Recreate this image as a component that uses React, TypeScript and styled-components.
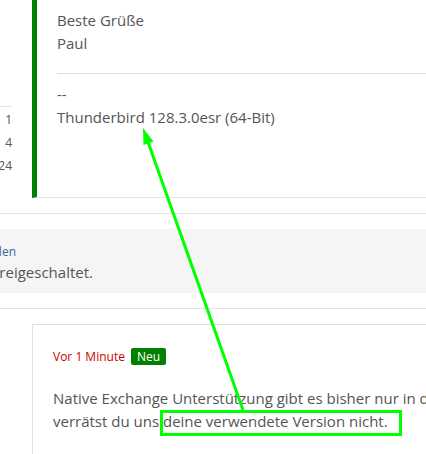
import React from "react";
import styled, { createGlobalStyle } from "styled-components";

const GlobalStyle = createGlobalStyle`
  html, body {
    margin: 0;
    padding: 0;
    background: #fff;
  }
  body {
    font-family: "Open Sans", "Liberation Sans", sans-serif;
    color: #555;
    overflow: hidden;
  }
`;

const Page = styled.div`
  position: relative;
  width: 426px;
  height: 454px;
  overflow: hidden;
`;

const Post = styled.article`
  display: grid;
  grid-template-columns: 12px 1fr;
  column-gap: 20px;
  padding-bottom: 15px;
  border-bottom: 1px solid #e3e3e3;
`;

const Sidebar = styled.aside`
  padding-top: 106px;
`;

const StatList = styled.dl`
  margin: 0;
  padding-top: 1px;
  border-top: 1px solid #e3e3e3;
`;

const StatValue = styled.dd`
  display: flex;
  justify-content: flex-end;
  margin: 0;
  white-space: nowrap;
  font-size: 12px;
  line-height: 23px;
`;

const Content = styled.div`
  padding: 9px 0 69px 20px;
  border-left: 5px solid #008000;
  border-bottom: 1px solid #e3e3e3;
  font-size: 15px;
  line-height: 22.5px;

  p {
    margin: 0;
  }
`;

const Rule = styled.hr`
  height: 0;
  margin: 19px 0 9px;
  border: 0;
  border-top: 1px solid #e0e0e0;
`;

const Notice = styled.section`
  margin: 15px 0;
  padding: 14px 0 9px;
  background: #f5f5f5;
`;

const NoticeLine = styled.div<{ $end: number; $small?: boolean }>`
  display: flex;
  justify-content: flex-end;
  width: ${props => props.$end}px;
  white-space: nowrap;
  font-size: ${props => (props.$small ? "12px" : "15px")};
  line-height: ${props => (props.$small ? "18px" : "23px")};
  color: ${props => (props.$small ? "#3d6a8e" : "#555")};
`;

const Replies = styled.section`
  padding-top: 15px;
  border-top: 1px solid #e3e3e3;
`;

const ReplyBox = styled.div`
  margin: 0 -30px 0 32px;
  padding: 23px 20px 30px;
  border: 1px solid #e0e0e0;
`;

const Meta = styled.div`
  display: flex;
  align-items: center;
  gap: 6px;
  height: 17px;
`;

const Time = styled.span`
  font-size: 12px;
  line-height: 18px;
  color: #cc0000;
`;

const Badge = styled.span`
  padding: 0 6px;
  border-radius: 2px;
  background: #008000;
  color: #fff;
  font-size: 12px;
  line-height: 17px;
`;

const Message = styled.p`
  margin: 22px 0 0;
  font-size: 15px;
  line-height: 22.5px;
  white-space: nowrap;
`;

const Annotation = styled.svg`
  position: absolute;
  top: 0;
  left: 0;
  pointer-events: none;
`;

const stats = ["1", "4", "24"];

const App = () => {
  return (
    <Page>
      <GlobalStyle />
      <Post>
        <Sidebar>
          <StatList>
            {stats.map((value, idx) => (
              <StatValue key={idx}>{value}</StatValue>
            ))}
          </StatList>
        </Sidebar>
        <Content>
          <p>
            Beste Grüße
            <br />
            Paul
          </p>
          <Rule />
          <p>
            --
            <br />
            Thunderbird 128.3.0esr (64-Bit)
          </p>
        </Content>
      </Post>

      <Notice>
        <NoticeLine $end={16} $small>
          Inhalte teilen
        </NoticeLine>
        <NoticeLine $end={93}>Dieser Beitrag wurde noch nicht freigeschaltet.</NoticeLine>
      </Notice>

      <Replies>
        <ReplyBox>
          <Meta>
            <Time>Vor 1 Minute</Time>
            <Badge>Neu</Badge>
          </Meta>
          <Message>
            Native Exchange Unterstützung gibt es bisher nur in der Betaversion. Leider
            <br />
            verrätst du uns deine verwendete Version nicht.
          </Message>
        </ReplyBox>
      </Replies>

      <Annotation width="426" height="454" viewBox="0 0 426 454">
        <rect x="161.5" y="411.5" width="239" height="23" fill="none" stroke="#00ff00" strokeWidth="3" />
        <line x1="243" y1="410" x2="148" y2="142" stroke="#00ff00" strokeWidth="3" />
        <polygon points="143,128 153.5,141.5 143.5,145" fill="#00ff00" />
      </Annotation>
    </Page>
  );
};

export default App;
